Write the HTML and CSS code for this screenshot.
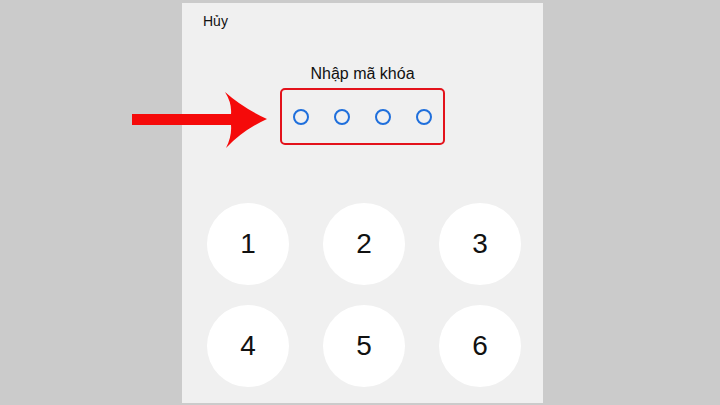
FILE: index.html
```html
<!DOCTYPE html>
<html lang="vi">
<head>
<meta charset="utf-8">
<title>Nhập mã khóa</title>
<link rel="stylesheet" href="styles.css">
</head>
<body>
<div class="screen">
  <div class="panel">
    <div class="cancel">Hủy</div>
    <div class="title">Nhập mã khóa</div>
    <div class="code-box">
      <span class="dot"></span>
      <span class="dot"></span>
      <span class="dot"></span>
      <span class="dot"></span>
    </div>
    <div class="keypad">
      <div class="key">1</div>
      <div class="key">2</div>
      <div class="key">3</div>
      <div class="key">4</div>
      <div class="key">5</div>
      <div class="key">6</div>
    </div>
  </div>
  <svg class="arrow" width="720" height="405" viewBox="0 0 720 405">
    <path d="M132,114 L231,114 Q232,103 225,92 Q243,108 267,119 Q243,130 226,148 Q232,136 231,125 L132,125 Z" fill="#f50a0a"/>
  </svg>
</div>
</body>
</html>
```
FILE: styles.css
```css
html, body {
  margin: 0;
  padding: 0;
}
body {
  background: #cbcbcb;
  font-family: "Liberation Sans", Arial, sans-serif;
  color: #111;
}
.screen {
  position: relative;
  width: 720px;
  height: 405px;
  padding-top: 3px;
  box-sizing: border-box;
  overflow: hidden;
}
.panel {
  width: 361px;
  height: 400px;
  margin-left: 182px;
  background: #f0f0f0;
  display: flex;
  flex-direction: column;
  align-items: center;
  padding-top: 10px;
  box-sizing: border-box;
}
.cancel {
  align-self: flex-start;
  margin-left: 21px;
  font-size: 14px;
  line-height: 16px;
}
.title {
  margin-top: 35px;
  font-size: 16px;
  line-height: 20px;
}
.code-box {
  margin-top: 4px;
  width: 165px;
  height: 57px;
  box-sizing: border-box;
  border: 2px solid #e3121b;
  border-radius: 5px;
  display: flex;
  align-items: center;
  justify-content: center;
  gap: 25px;
}
.dot {
  width: 16px;
  height: 16px;
  box-sizing: border-box;
  border: 2px solid #1f6fdc;
  border-radius: 50%;
}
.keypad {
  margin-top: 58px;
  display: grid;
  grid-template-columns: repeat(3, 82px);
  column-gap: 34px;
  row-gap: 20px;
  margin-left: 3px;
}
.key {
  width: 82px;
  height: 82px;
  border-radius: 50%;
  background: #ffffff;
  display: flex;
  align-items: center;
  justify-content: center;
  font-size: 28px;
  color: #111;
}
.arrow {
  position: absolute;
  left: 0;
  top: 0;
}
```
